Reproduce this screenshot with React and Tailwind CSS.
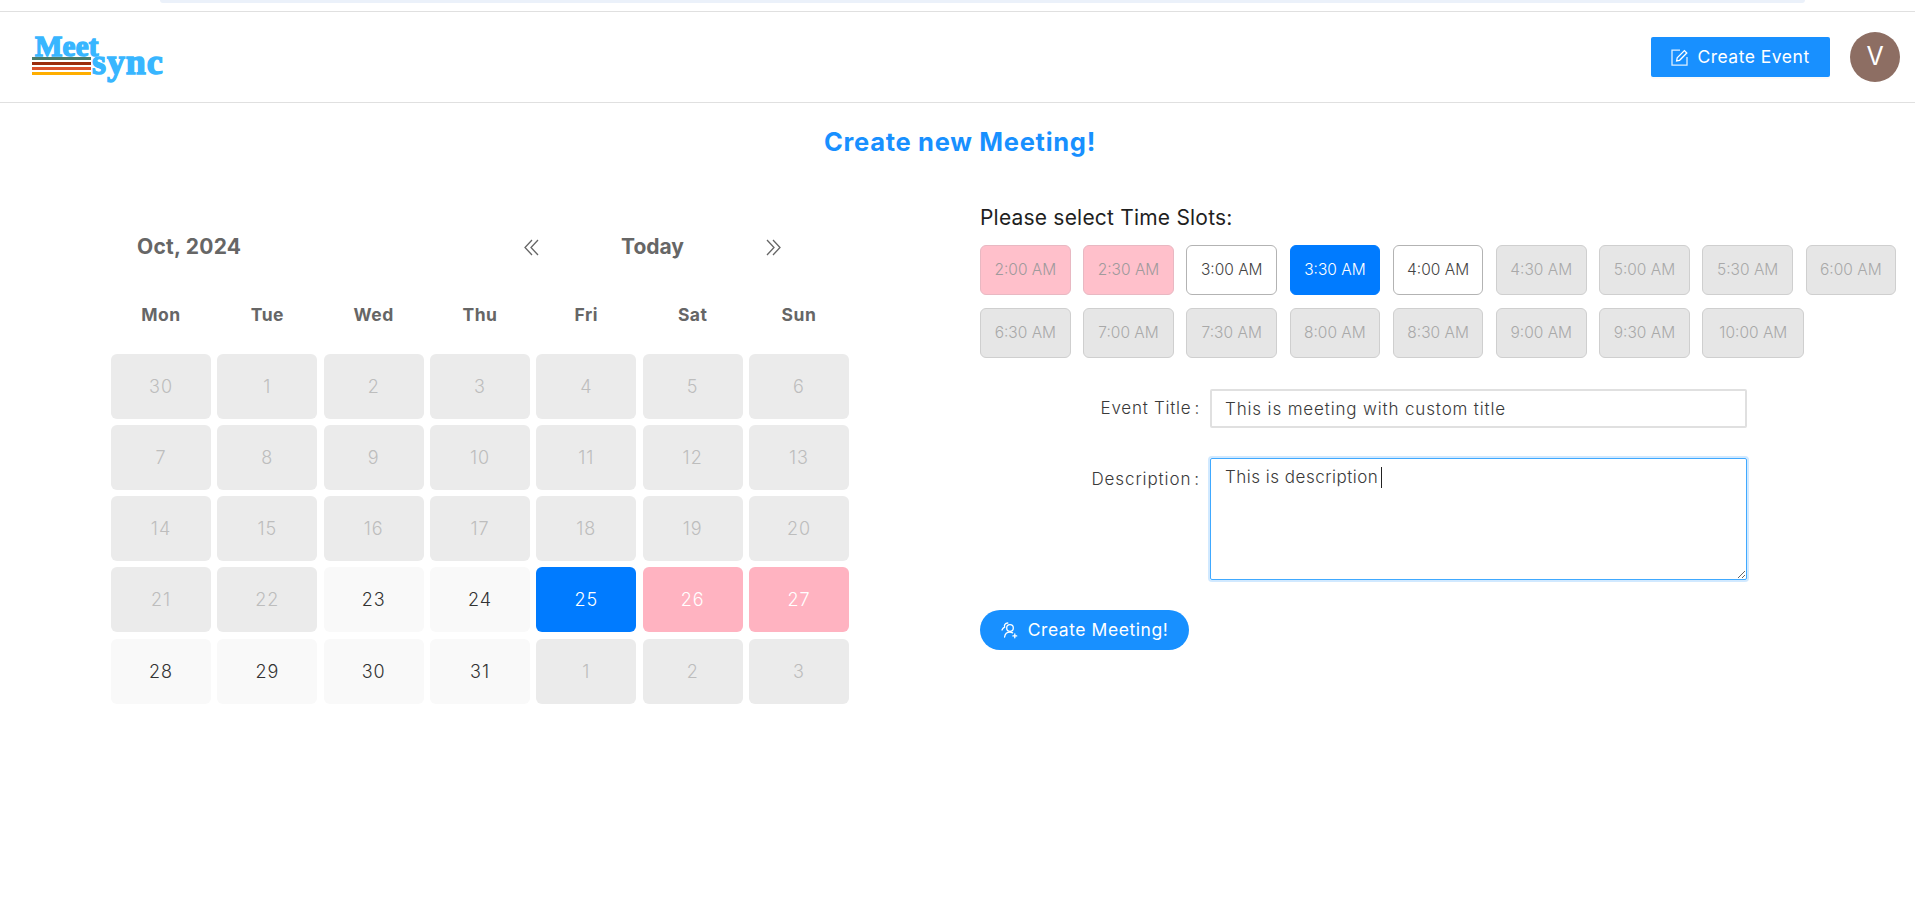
import React from "react";

const weekdays = ["Mon", "Tue", "Wed", "Thu", "Fri", "Sat", "Sun"];
const off = "bg-[#ebebeb] text-[#bdbdbd]";
const on = "bg-[#f9f9f9] text-[#333333]";
const sel = "bg-[#007bff] text-white";
const pink = "bg-[#ffb3c1] text-white";
const days = [
  ["30", off], ["1", off], ["2", off], ["3", off], ["4", off], ["5", off], ["6", off],
  ["7", off], ["8", off], ["9", off], ["10", off], ["11", off], ["12", off], ["13", off],
  ["14", off], ["15", off], ["16", off], ["17", off], ["18", off], ["19", off], ["20", off],
  ["21", off], ["22", off], ["23", on], ["24", on], ["25", sel], ["26", pink], ["27", pink],
  ["28", on], ["29", on], ["30", on], ["31", on], ["1", off], ["2", off], ["3", off],
];
const sBlock = "bg-[#ffc0cb] border-[#e8b8c2] text-[#a09a9c]";
const sOff = "bg-[#e6e6e6] border-[#cfcfcf] text-[#a9a9a9]";
const sOn = "bg-white border-[#b3b3b3] text-[#444444]";
const sSel = "bg-[#007bff] border-[#007bff] text-white";
const slots = [
  ["2:00 AM", sBlock], ["2:30 AM", sBlock], ["3:00 AM", sOn], ["3:30 AM", sSel], ["4:00 AM", sOn],
  ["4:30 AM", sOff], ["5:00 AM", sOff], ["5:30 AM", sOff], ["6:00 AM", sOff], ["6:30 AM", sOff],
  ["7:00 AM", sOff], ["7:30 AM", sOff], ["8:00 AM", sOff], ["8:30 AM", sOff], ["9:00 AM", sOff],
  ["9:30 AM", sOff], ["10:00 AM", sOff],
];

function DoubleChevron({ right }) {
  return (
    <svg width="16" height="17" viewBox="0 0 16 17" fill="none" stroke="#666666" strokeWidth="1.3" className={right ? "" : "-scale-x-100"}>
      <path d="M1 1l7 7.5L1 16" />
      <path d="M7 1l7 7.5L7 16" />
    </svg>
  );
}

function EditIcon() {
  return (
    <svg width="17" height="17" viewBox="0 0 17 17" fill="none" stroke="white" strokeWidth="1.3">
      <path d="M9 1.2H1v15h15V8" strokeOpacity="0.85" />
      <path d="M5.6 12l.6-3.1L13.4 1.6l2.4 2.4-7.2 7.3z" fill="none" />
    </svg>
  );
}

function MeetIcon() {
  return (
    <svg width="17" height="17" viewBox="0 0 17 17" fill="none" stroke="white" strokeWidth="1.3" strokeLinecap="round">
      <circle cx="9" cy="6" r="3.3" />
      <path d="M3.6 15c.4-3 2.3-4.8 5.3-4.8 1 0 1.9.2 2.7.6" />
      <path d="M1 8C1.6 6.6 2.5 5.7 3.6 5.1 3 3.1 4 1.2 6.8 1" />
      <path d="M13.8 12v3.8M11.9 13.9h3.8" />
    </svg>
  );
}

export default function App() {
  return (
    <div className="bg-white font-['Inter',sans-serif]">
      <div className="h-[3px] ml-[160px] mr-[110px] bg-[#ebf1fa] rounded-b-[8px]" />
      <header className="mt-[8px] h-[92px] border-y border-[#e0e0e0] flex items-center justify-between pl-[32px] pr-[15px]">
        <div className="w-[135px] h-[42px] font-['Liberation_Serif',serif] font-bold text-[#38b6ff] [-webkit-text-stroke:1.4px_#38b6ff]">
          <div className="pl-[3px] text-[29px] tracking-[0.2px] h-[21px] leading-[21px]">Meet</div>
          <div className="flex items-start h-[21px]">
            <div className="w-[59px] flex flex-col gap-[2px]">
              <div className="h-[3px] bg-[#4a7c6b]" />
              <div className="h-[3px] bg-[#9c2c0c]" />
              <div className="h-[3px] bg-[#d9512c]" />
              <div className="h-[3px] bg-[#ffae00]" />
            </div>
            <div className="text-[36px] tracking-[0.9px] leading-[10px] pl-[1px]">sync</div>
          </div>
        </div>
        <div className="flex items-center gap-[20px]">
          <button className="w-[179px] h-[40px] bg-[#1890ff] rounded-[2px] text-white text-[17.5px] tracking-[0.5px] flex items-center justify-center gap-[9px] shadow-[0_2px_0_rgba(0,0,0,0.02)]">
            <EditIcon />
            Create Event
          </button>
          <div className="w-[50px] h-[50px] rounded-full bg-[#8d6e63] text-white text-[25px] flex items-center justify-center">V</div>
        </div>
      </header>

      <h1 className="h-[78px] pl-[5px] flex items-center justify-center text-[25.5px] font-bold text-[#1890ff] tracking-[0.7px]">Create new Meeting!</h1>

      <main className="flex pl-[111px]">
        <section className="w-[738px] pt-[46px]">
          <div className="h-[40px] flex items-center text-[21px] font-bold text-[#666666]">
            <div className="pl-[26px] w-[412px] tracking-[0.25px]">Oct, 2024</div>
            <DoubleChevron />
            <div className="w-[227px] text-center">Today</div>
            <DoubleChevron right />
          </div>
          <div className="mt-[28px] h-[40px] grid grid-cols-7 gap-x-[6.3px] items-center text-center text-[17.5px] font-bold text-[#666666] tracking-[0.5px]">
            {weekdays.map((d) => <div key={d}>{d}</div>)}
          </div>
          <div className="mt-[19px] grid grid-cols-7 gap-x-[6.3px] gap-y-[6.15px]">
            {days.map(([d, c], i) => (
              <div key={i} className={`h-[65px] rounded-[6px] flex items-center justify-center text-[18px] font-light tracking-[1px] ${c}`}>{d}</div>
            ))}
          </div>
        </section>

        <section className="ml-[131px] w-[930px] pt-[23px]">
          <div className="h-[28px] leading-[28px] text-[21px] text-[#1f1f1f] tracking-[0.2px]">Please select Time Slots:</div>
          <div className="mt-[13px] flex flex-wrap gap-x-[12.5px] gap-y-[13px]">
            {slots.map(([s, c]) => (
              <div key={s} className={`${s === "10:00 AM" ? "w-[102px]" : "w-[90.7px]"} h-[50px] border rounded-[6px] flex items-center justify-center text-[15.5px] font-light ${c}`}>{s}</div>
            ))}
          </div>
          <div className="mt-[31px] flex items-center">
            <label className="w-[220px] text-right text-[17px] text-[#3a3a3a] font-light tracking-[0.75px]">Event Title<span className="ml-[3px]">:</span></label>
            <input readOnly value="This is meeting with custom title" className="ml-[10px] w-[537px] h-[39px] border-2 border-[#e0e0e0] rounded-[2px] px-[13px] text-[17px] font-light text-[#3a3a3a] tracking-[0.85px] outline-none font-['Inter',sans-serif]" />
          </div>
          <div className="mt-[30px] flex items-start">
            <label className="w-[220px] pt-[9px] text-right text-[17px] text-[#3a3a3a] font-light tracking-[0.9px]">Description<span className="ml-[3px]">:</span></label>
            <div className="relative ml-[10px] w-[537px] h-[122px]">
              <textarea readOnly value="This is description" className="block w-full h-full border border-[#40a9ff] rounded-[2px] px-[14px] py-[6px] text-[17px] font-light leading-[24px] text-[#3a3a3a] tracking-[0.5px] outline-none shadow-[0_0_0_2px_rgba(24,144,255,0.2)] font-['Inter',sans-serif]" />
              <span className="absolute left-[171px] top-[9px] w-px h-[21px] bg-[#222222]" />
            </div>
          </div>
          <button className="mt-[30px] w-[209px] h-[40px] rounded-full bg-[#1890ff] text-white text-[17.5px] tracking-[0.55px] flex items-center justify-center gap-[10px]">
            <MeetIcon />
            Create Meeting!
          </button>
        </section>
      </main>
    </div>
  );
}
